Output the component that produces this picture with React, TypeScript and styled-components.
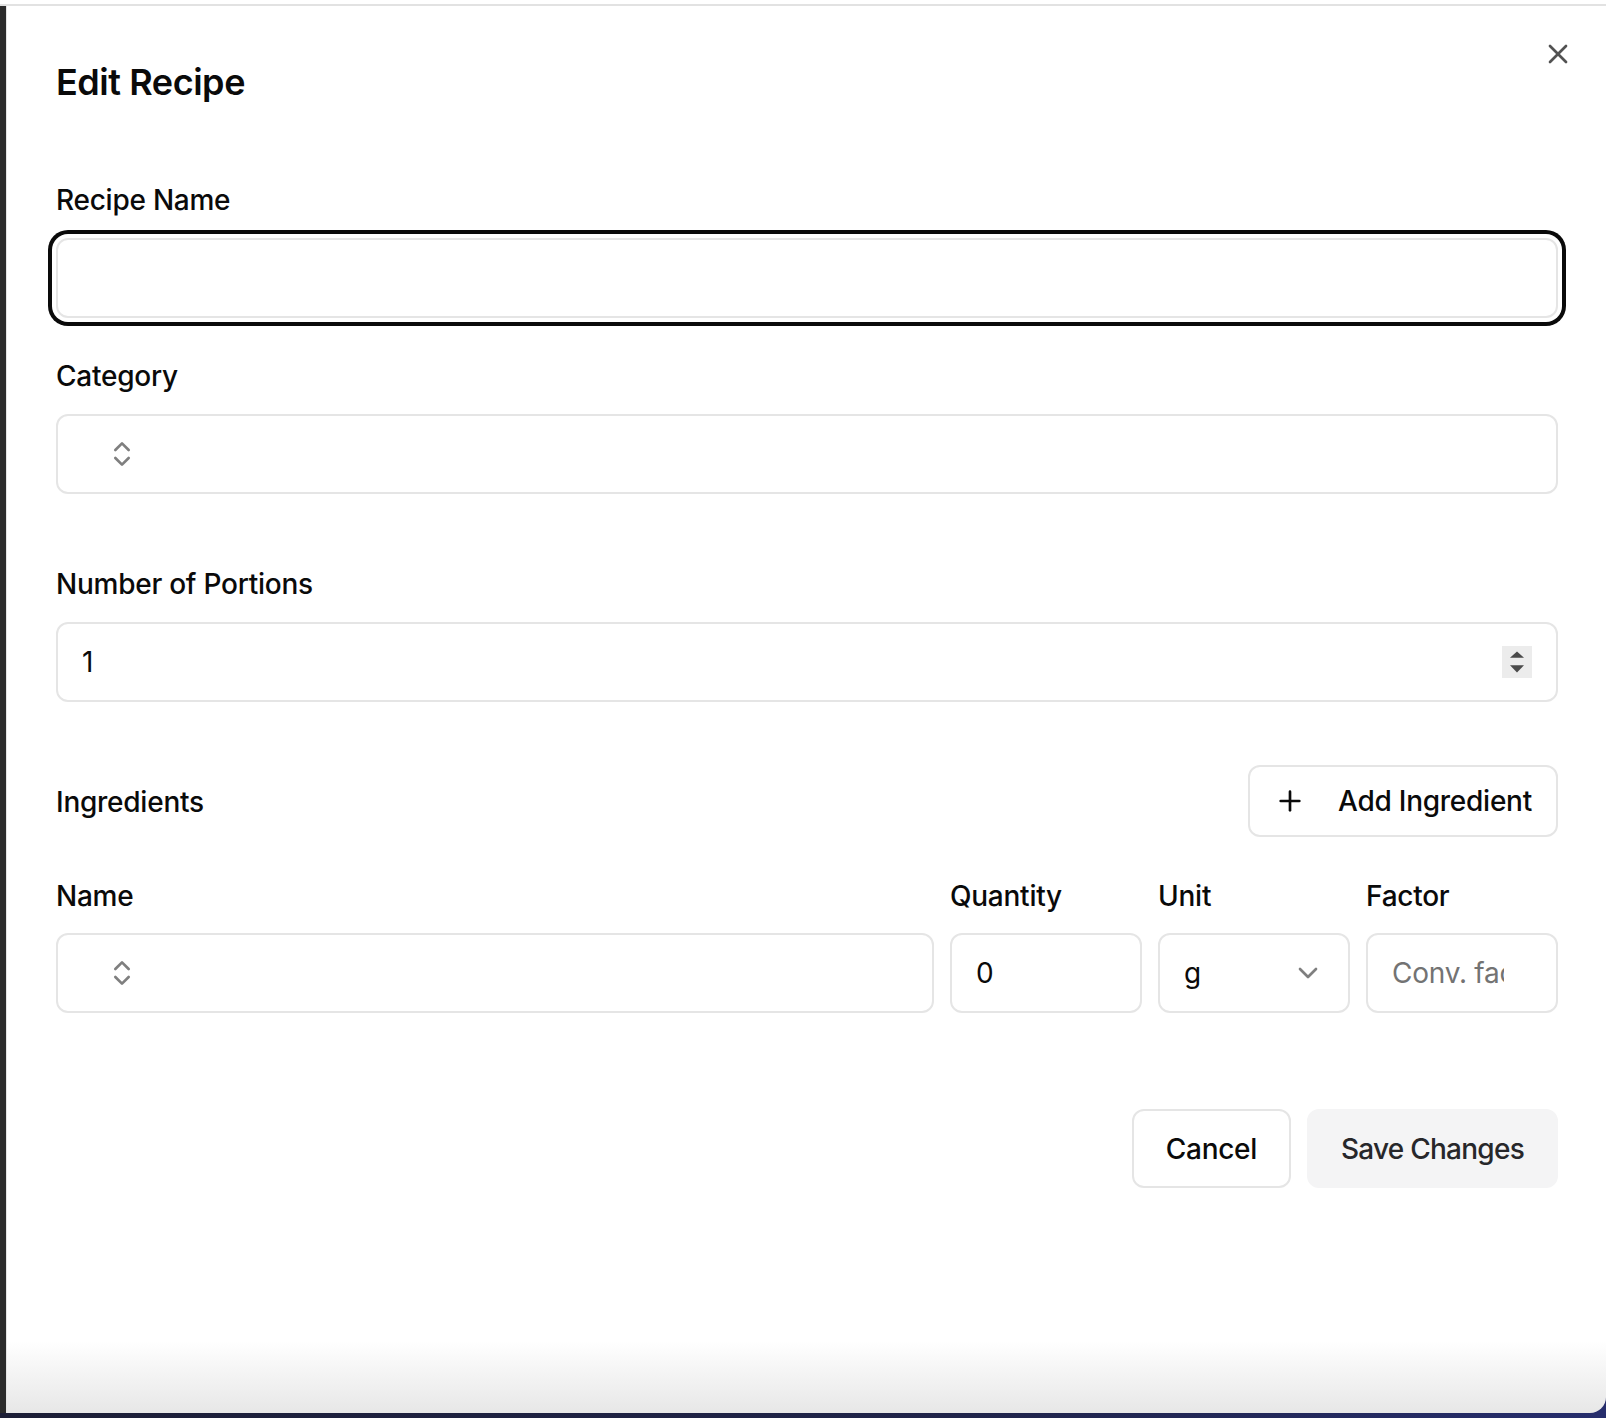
import React from "react";
import styled, { createGlobalStyle, css } from "styled-components";
import { X, ChevronsUpDown, ChevronDown, Plus } from "lucide-react";

const GlobalStyle = createGlobalStyle`
  html, body { margin: 0; padding: 0; background: #fff; }
  body {
    font-family: Inter, "Noto Sans", "Liberation Sans", sans-serif;
    -webkit-font-smoothing: antialiased;
  }
  * { box-sizing: border-box; }
`;

const Screen = styled.div`
  width: 1606px;
  height: 1418px;
  display: flex;
  flex-direction: column;
  padding-bottom: 5px;
  overflow: hidden;
  background: linear-gradient(to right, #1c1e36 0%, #20244a 60%, #262d6c 100%);
`;

const TopStrip = styled.div`
  flex: none;
  height: 4px;
  background: #fff;
`;

const Stage = styled.div`
  flex: 1;
  min-height: 0;
  display: flex;
  border-top: 2px solid #e2e2e2;
`;

const SideBar = styled.div`
  flex: none;
  width: 6px;
  background: #2b2b2b;
`;

const Dialog = styled.section`
  position: relative;
  flex: 1;
  display: flex;
  flex-direction: column;
  padding: 58px 48px 0 49px;
  border-left: 1px solid #e4e4e4;
  border-bottom-right-radius: 16px;
  background: linear-gradient(to bottom, #ffffff calc(100% - 72px), #e7e7e7 100%);
`;

const CloseButton = styled.button`
  position: absolute;
  top: 32px;
  right: 32px;
  width: 32px;
  height: 32px;
  padding: 0;
  border: 0;
  background: none;
  color: #0a0a0a;
  opacity: 0.7;
  display: flex;
  align-items: center;
  justify-content: center;
`;

const Title = styled.h2`
  margin: 0;
  font-size: 36px;
  line-height: 36px;
  font-weight: 600;
  letter-spacing: -0.45px;
  color: #0a0a0a;
`;

const Field = styled.div<{ $top: number }>`
  display: flex;
  flex-direction: column;
  gap: 24px;
  margin-top: ${(p) => p.$top}px;
`;

const Label = styled.label`
  padding-top: 1px;
  font-size: 28px;
  line-height: 28px;
  font-weight: 500;
  letter-spacing: -0.25px;
  color: #0a0a0a;
`;

const Control = styled.div<{ $focused?: boolean; $justify?: string }>`
  height: 80px;
  display: flex;
  align-items: center;
  justify-content: ${(p) => p.$justify || "flex-start"};
  padding: 0 24px;
  border: 2px solid #e5e5e5;
  border-radius: 12px;
  background: #fff;
  font-size: 28px;
  line-height: 40px;
  letter-spacing: -0.25px;
  color: #0a0a0a;
  ${(p) =>
    p.$focused &&
    css`
      box-shadow: 0 0 0 4px #fff, 0 0 0 8px #0a0a0a;
    `}
`;

const SelectIcon = styled.span<{ $indent?: number }>`
  display: flex;
  margin-left: ${(p) => p.$indent || 0}px;
  color: #7f7f7f;
`;

const Spinner = styled.span`
  width: 30px;
  height: 32px;
  background: #ececec;
  display: flex;
  align-items: center;
  justify-content: center;
`;

const Placeholder = styled.span`
  width: 112px;
  overflow: hidden;
  white-space: nowrap;
  color: #737373;
`;

const SectionHeader = styled.div<{ $top: number }>`
  margin-top: ${(p) => p.$top}px;
  display: flex;
  align-items: center;
  justify-content: space-between;
`;

const Button = styled.button<{
  $variant?: "outline" | "secondary";
  $h: number;
  $px: number;
  $track: number;
}>`
  height: ${(p) => p.$h}px;
  padding: 0 ${(p) => p.$px}px;
  display: inline-flex;
  align-items: center;
  gap: 32px;
  border-radius: 12px;
  font-family: inherit;
  font-size: 28px;
  font-weight: 500;
  line-height: 40px;
  letter-spacing: ${(p) => p.$track}px;
  cursor: pointer;
  ${(p) =>
    p.$variant === "secondary"
      ? css`
          border: 2px solid #f4f4f5;
          background: #f4f4f5;
          color: #27272a;
        `
      : css`
          border: 2px solid #e5e5e5;
          background: #fff;
          color: #0a0a0a;
        `}
`;

const IngredientGrid = styled.div<{ $top: number }>`
  margin-top: ${(p) => p.$top}px;
  display: grid;
  grid-template-columns: 1fr repeat(3, 192px);
  column-gap: 16px;
  row-gap: 23px;
`;

const Footer = styled.div<{ $top: number }>`
  margin-top: ${(p) => p.$top}px;
  display: flex;
  justify-content: flex-end;
  gap: 16px;
`;

const SpinArrows = () => (
  <svg width="30" height="32" viewBox="0 0 30 32" aria-hidden>
    <polygon points="8,11.8 22,11.8 15,5.6" fill="#4a4a4a" />
    <polygon points="8,19.2 22,19.2 15,26.4" fill="#4a4a4a" />
  </svg>
);

export default function App() {
  return (
    <>
      <GlobalStyle />
      <Screen>
        <TopStrip />
        <Stage>
          <SideBar />
          <Dialog>
            <CloseButton aria-label="Close">
              <X size={32} strokeWidth={2} />
            </CloseButton>
            <Title>Edit Recipe</Title>

            <Field $top={85}>
              <Label>Recipe Name</Label>
              <Control $focused />
            </Field>

            <Field $top={43}>
              <Label>Category</Label>
              <Control>
                <SelectIcon $indent={24}>
                  <ChevronsUpDown size={32} strokeWidth={2} />
                </SelectIcon>
              </Control>
            </Field>

            <Field $top={75}>
              <Label>Number of Portions</Label>
              <Control $justify="space-between">
                <span>1</span>
                <Spinner>
                  <SpinArrows />
                </Spinner>
              </Control>
            </Field>

            <SectionHeader $top={63}>
              <Label>Ingredients</Label>
              <Button $variant="outline" $h={72} $px={24} $track={-0.25}>
                <Plus size={32} strokeWidth={2} />
                Add Ingredient
              </Button>
            </SectionHeader>

            <IngredientGrid $top={44}>
              <Label>Name</Label>
              <Label>Quantity</Label>
              <Label>Unit</Label>
              <Label>Factor</Label>
              <Control>
                <SelectIcon $indent={24}>
                  <ChevronsUpDown size={32} strokeWidth={2} />
                </SelectIcon>
              </Control>
              <Control>0</Control>
              <Control $justify="space-between">
                <span>g</span>
                <SelectIcon>
                  <ChevronDown size={32} strokeWidth={2} />
                </SelectIcon>
              </Control>
              <Control>
                <Placeholder>Conv. factor</Placeholder>
              </Control>
            </IngredientGrid>

            <Footer $top={96}>
              <Button $variant="outline" $h={79} $px={32} $track={-0.3}>
                Cancel
              </Button>
              <Button $variant="secondary" $h={79} $px={32} $track={-0.75}>
                Save Changes
              </Button>
            </Footer>
          </Dialog>
        </Stage>
      </Screen>
    </>
  );
}
